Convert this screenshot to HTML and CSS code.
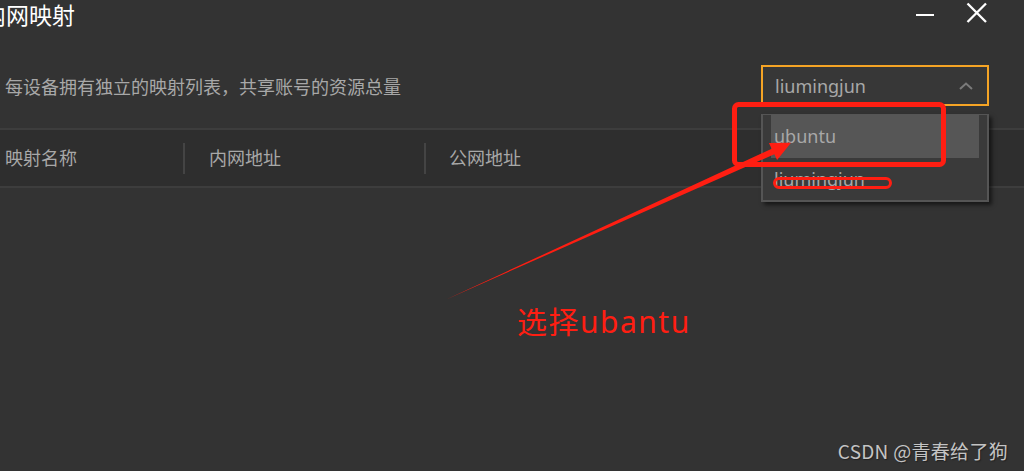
FILE: index.html
```html
<!DOCTYPE html>
<html lang="zh-CN">
<head>
    <meta charset="UTF-8">
    <meta name="viewport" content="width=device-width, initial-scale=1.0">
    <title>内网映射</title>
<link rel="stylesheet" href="styles.css">
</head>
<body>
    <div id="wrapper">
        <div class="topbar">
            <span class="title">内网映射</span>
            <div class="winbtns">
                <svg class="winbtn" width="20" height="22" viewBox="0 0 20 22"><rect x="1" y="12" width="18" height="2" fill="#fff"/></svg>
                <svg class="winbtn" width="24" height="22" viewBox="0 0 24 22"><path d="M2.5 1.5 L21 20 M21 1.5 L2.5 20" stroke="#fff" stroke-width="2.3" fill="none"/></svg>
            </div>
        </div>

        <div class="toolbar">
            <span class="desc">每设备拥有独立的映射列表，共享账号的资源总量</span>
            <div class="select">
                <span>liumingjun</span>
                <svg width="14" height="8" viewBox="0 0 14 8"><polyline points="1,7 7,1.5 13,7" stroke="#7a7a7a" stroke-width="2" fill="none"/></svg>
                <!-- 下拉菜单 -->
                <ul class="dropdown">
                    <li class="on">ubuntu</li>
                    <li>liumingjun</li>
                </ul>
            </div>
        </div>

        <div class="thead">
            <div class="col c1">映射名称</div>
            <div class="col c2">内网地址</div>
            <div class="col c3">公网地址</div>
        </div>
    </div>

    <!-- 红色标注 -->
    <svg class="mark" width="1024" height="471" viewBox="0 0 1024 471">
        <rect x="734.5" y="104.5" width="209" height="60" rx="4" fill="none" stroke="#ff1e12" stroke-width="5"/>
        <rect x="774.5" y="178.5" width="116" height="9" rx="4.5" fill="none" stroke="#ff1e12" stroke-width="3"/>
        <polygon points="445,300 771.7,148.8 768.9,142.9 791,142.8 777.1,160.1 774.3,154.2" fill="#ff1e12"/>
    </svg>
    <div class="note">选择ubantu</div>
    <div class="csdn">CSDN @青春给了狗</div>
</body>
</html>
```

FILE: styles.css
```css
body{
    margin: 0;
    background-color: #333333;
    font-family: "Noto Sans", "Noto Sans CJK SC", sans-serif;
    overflow: hidden;
    height: 471px;
    position: relative;
}
#wrapper{
    width: 1024px;
}
.topbar{
    display: flex;
    justify-content: space-between;
    align-items: flex-start;
    height: 30px;
}
.title{
    margin-left: -17px;
    font-size: 23px;
    line-height: 30px;
    color: #ffffff;
}
.winbtns{
    display: flex;
    gap: 30px;
    margin-right: 35px;
    padding-top: 2px;
}
.winbtn{
    display: block;
}
.toolbar{
    display: flex;
    justify-content: space-between;
    align-items: center;
    margin-top: 35px;
    padding-left: 5px;
    padding-right: 35px;
}
.desc{
    font-size: 18px;
    color: #a8a8a8;
}
.select{
    position: relative;
    box-sizing: border-box;
    width: 228px;
    height: 41px;
    border: 2px solid #f5a425;
    background-color: #373737;
    display: flex;
    align-items: center;
    justify-content: space-between;
    padding: 0 14px 0 12px;
    font-size: 18px;
    color: #a8a8a8;
}
.dropdown{
    position: absolute;
    left: -2px;
    top: 47px;
    box-sizing: border-box;
    width: 228px;
    height: 88px;
    margin: 0;
    padding: 0 8px;
    list-style: none;
    border: 2px solid #555555;
    border-top-width: 1px;
    background-color: #3a3a3a;
    box-shadow: 3px 3px 4px rgba(0,0,0,0.55);
}
.dropdown li{
    height: 43px;
    line-height: 43px;
    padding-left: 3px;
    color: #a8a8a8;
}
.dropdown li.on{
    background-color: #565656;
}
.thead{
    display: flex;
    align-items: center;
    margin-top: 22px;
    height: 56px;
    border-top: 2px solid #3d3d3d;
    border-bottom: 2px solid #3d3d3d;
    background-color: #2e2e2e;
    font-size: 18px;
    color: #a8a8a8;
}
.col{
    box-sizing: border-box;
    height: 31px;
    line-height: 31px;
}
.c1{
    width: 185px;
    padding-left: 5px;
    border-right: 2px solid #444444;
}
.c2{
    width: 241px;
    padding-left: 24px;
    border-right: 2px solid #444444;
}
.c3{
    padding-left: 23px;
}
.mark{
    position: absolute;
    left: 0;
    top: 0;
    pointer-events: none;
}
.note{
    position: absolute;
    left: 517px;
    top: 300px;
    font-size: 30px;
    line-height: 44px;
    letter-spacing: 1.5px;
    color: #ff1e12;
}
.csdn{
    position: absolute;
    right: 16px;
    bottom: 7px;
    font-family: "Noto Sans CJK SC", sans-serif;
    font-size: 19px;
    letter-spacing: 0.3px;
    color: #c4c4c4;
    text-shadow: 1px 1px 1px #222;
}
```
